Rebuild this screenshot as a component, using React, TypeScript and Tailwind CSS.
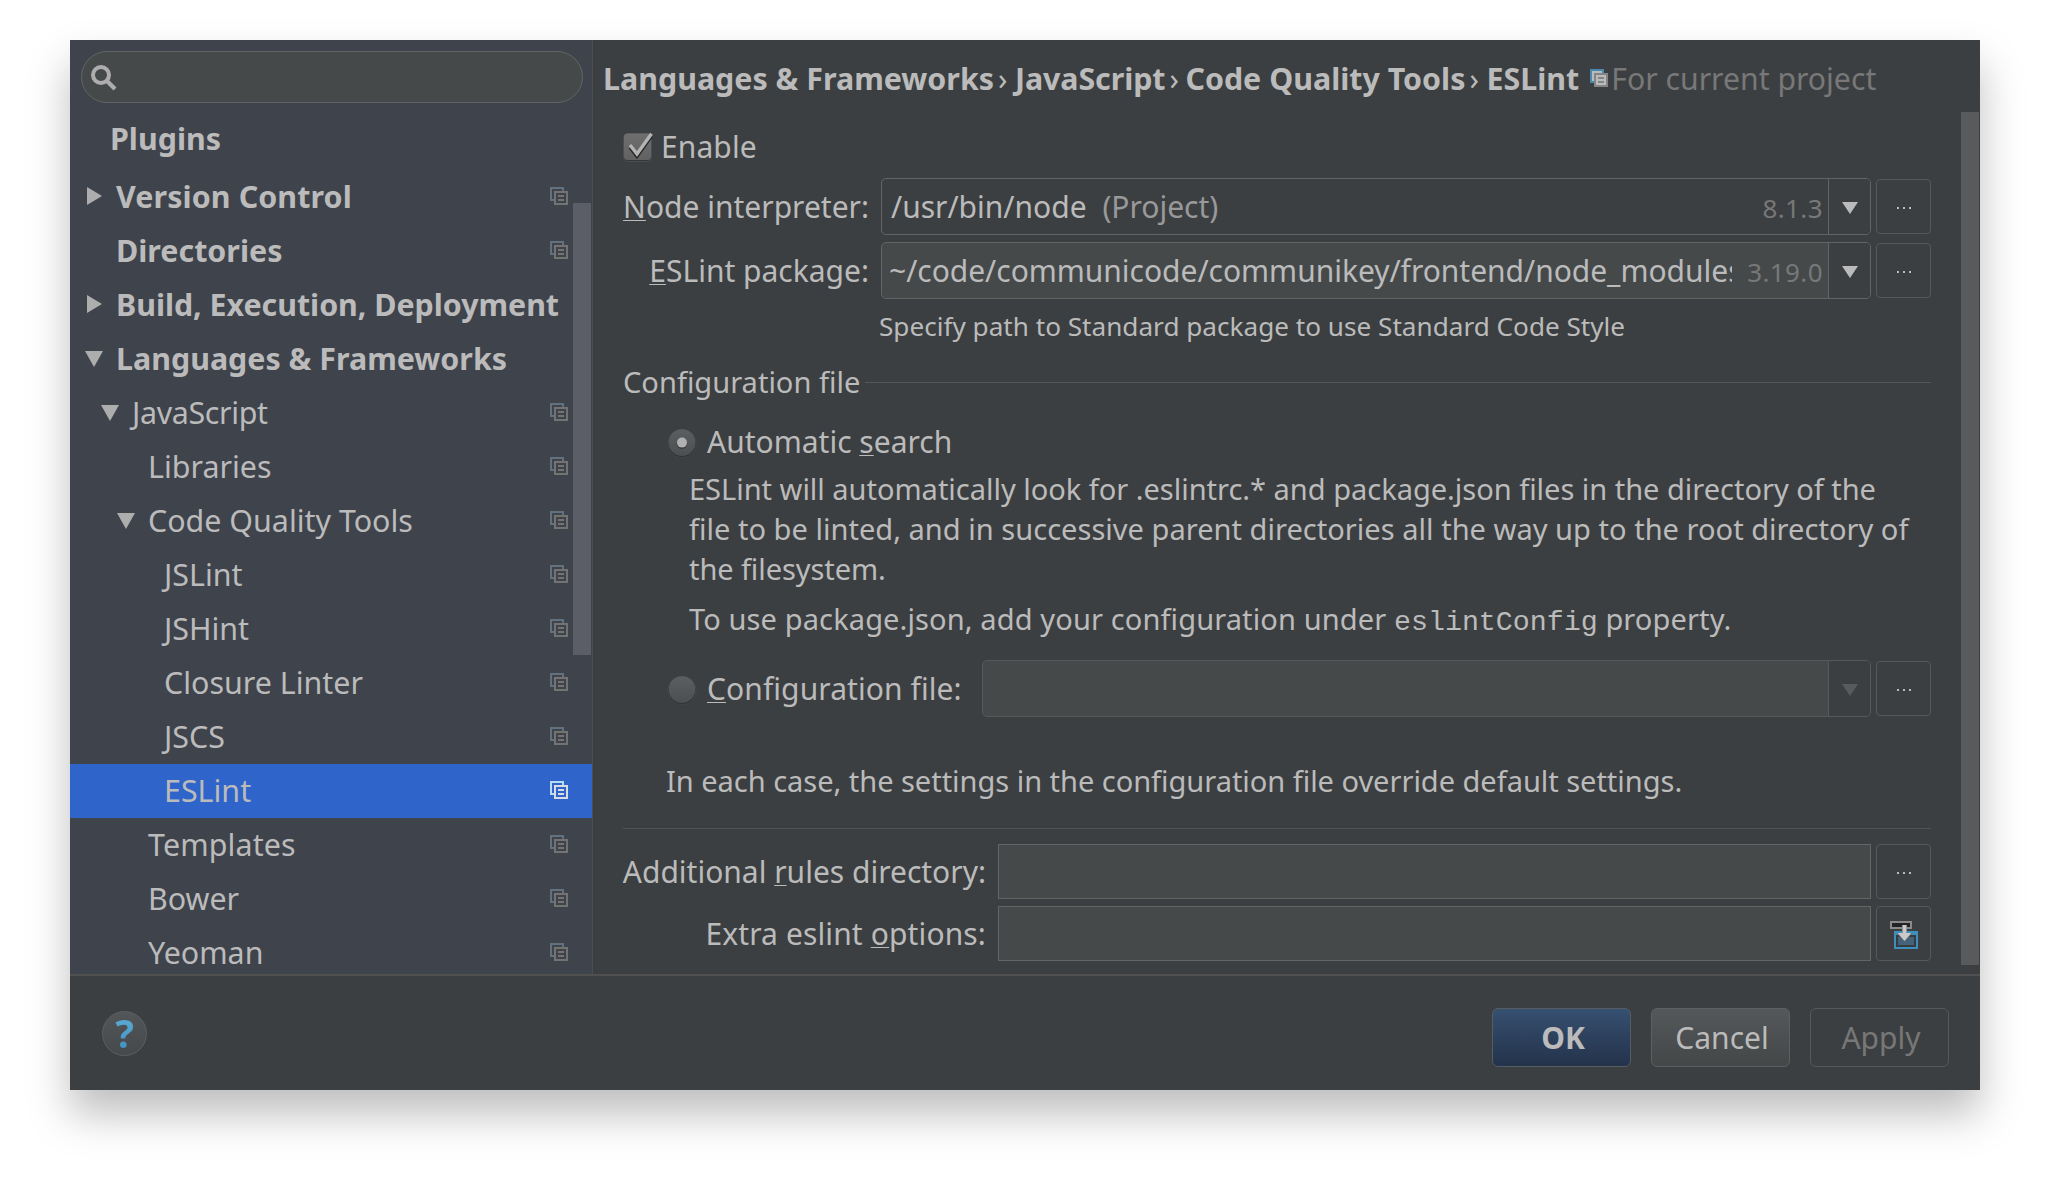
import type { ReactNode } from "react";

type Arrow = "right" | "down" | null;

interface TreeItem {
  label: string;
  indent: string;
  arrow?: Arrow;
  bold?: boolean;
  shared?: boolean;
  selected?: boolean;
  tracking?: string;
}

const L0 = "w-[46px] pr-[13px]";
const L1 = "w-[62px] pr-[13px]";
const L2 = "w-[78px] pr-[13px]";
const L3 = "w-[94px] pr-[13px]";

const tree: TreeItem[] = [
  { label: "Version Control", indent: L0, arrow: "right", bold: true, shared: true, tracking: "tracking-[0.1px]" },
  { label: "Directories", indent: L0, bold: true, shared: true },
  { label: "Build, Execution, Deployment", indent: L0, arrow: "right", bold: true, tracking: "tracking-[-0.04px]" },
  { label: "Languages & Frameworks", indent: L0, arrow: "down", bold: true },
  { label: "JavaScript", indent: L1, arrow: "down", shared: true, tracking: "tracking-[-0.35px]" },
  { label: "Libraries", indent: L2, shared: true },
  { label: "Code Quality Tools", indent: L2, arrow: "down", shared: true },
  { label: "JSLint", indent: L3, shared: true },
  { label: "JSHint", indent: L3, shared: true },
  { label: "Closure Linter", indent: L3, shared: true },
  { label: "JSCS", indent: L3, shared: true },
  { label: "ESLint", indent: L3, shared: true, selected: true },
  { label: "Templates", indent: L2, shared: true, tracking: "tracking-[0.12px]" },
  { label: "Bower", indent: L2, shared: true },
  { label: "Yeoman", indent: L2, shared: true },
];

function CopyIcon({ back, front, fill }: { back: string; front: string; fill?: string }) {
  return (
    <svg width="18" height="18" viewBox="0 0 18 18" shapeRendering="crispEdges" className="shrink-0">
      {fill && <path d="M2 2h10v2H4v8H2z" fill={fill} />}
      <path d="M0 0h14v4h-2V2H2v10h2v2H0z" fill={back} />
      {fill && <path d="M6 6h10v10H6z" fill={fill} />}
      <path d="M4 4h14v14H4zM6 6v10h10V6z" fillRule="evenodd" fill={front} />
      <path d="M8 8h6v2H8zM8 12h6v2H8z" fill={front} />
    </svg>
  );
}

function TreeArrow({ kind }: { kind: Arrow }) {
  if (kind === "right")
    return (
      <svg width="18" height="18" viewBox="0 0 18 18" className="-mt-[2px] shrink-0">
        <path d="M2 0 17 9 2 18z" fill="#adadad" />
      </svg>
    );
  return (
    <svg width="18" height="18" viewBox="0 0 18 18" className="shrink-0">
      <path d="M0 1h18L9 17z" fill="#adadad" />
    </svg>
  );
}

function TreeRow({ item }: { item: TreeItem }) {
  return (
    <div
      className={
        "flex h-[54px] shrink-0 items-center pr-[24px] " + (item.selected ? "bg-[#2f65ca]" : "")
      }
    >
      <div className={"flex shrink-0 justify-end " + item.indent}>
        {item.arrow && <TreeArrow kind={item.arrow} />}
      </div>
      <span
        className={
          "grow whitespace-nowrap text-[30.4px] " +
          (item.bold ? "font-bold " : "") +
          (item.tracking ?? "")
        }
      >
        {item.label}
      </span>
      {item.shared && (
        <div className="-mt-[2px]">
          {item.selected ? (
            <CopyIcon back="#b5dbf5" front="#d8dce2" />
          ) : (
            <CopyIcon back="#63717c" front="#737372" />
          )}
        </div>
      )}
    </div>
  );
}

function U({ children }: { children: ReactNode }) {
  return (
    <span className="underline decoration-1 underline-offset-[2px] [text-decoration-skip-ink:none]">
      {children}
    </span>
  );
}

function DropButton({ disabled }: { disabled?: boolean }) {
  return (
    <div
      className={
        "flex w-[42px] shrink-0 items-center justify-center rounded-r-[4px] border-l bg-[#3c3f41] " +
        (disabled ? "border-[#575858]" : "border-[#646464]")
      }
    >
      <svg width="16" height="12" viewBox="0 0 16 12" className="mt-[3px]">
        <path d="M0 0h16L8 12z" fill={disabled ? "#585a5b" : "#bbbbbb"} />
      </svg>
    </div>
  );
}

function SquareButton({ children }: { children?: ReactNode }) {
  return (
    <button className="ml-[5px] flex h-[55px] w-[55px] shrink-0 items-center justify-center self-center rounded-[4px] border border-[#56585a]">
      {children ?? (
        <svg width="14" height="2" viewBox="0 0 14 2" className="mt-[2px]" shapeRendering="crispEdges">
          <path d="M0 0h2v2H0zM6 0h2v2H6zM12 0h2v2h-2z" fill="#bbbbbb" />
        </svg>
      )}
    </button>
  );
}

function Radio({ on }: { on?: boolean }) {
  return (
    <svg width="30" height="30" viewBox="0 0 30 30" className="mt-[2px] shrink-0">
      <defs>
        <linearGradient id="radioFill" x1="0" y1="0" x2="0" y2="1">
          <stop offset="0" stopColor="#5b5f61" />
          <stop offset="1" stopColor="#4b4f51" />
        </linearGradient>
      </defs>
      <circle cx="15" cy="15.6" r="14" fill="#303234" />
      <circle cx="15" cy="15.4" r="14.3" fill="none" stroke="#4a4d4f" strokeWidth="0.6" />
      <circle cx="15" cy="14.6" r="13.4" fill="url(#radioFill)" />
      {on && (
        <>
          <circle cx="15" cy="15.6" r="5.2" fill="#333537" />
          <circle cx="15" cy="14.6" r="5" fill="#b0b0b0" />
        </>
      )}
    </svg>
  );
}

function CheckBox() {
  return (
    <svg width="30" height="30" viewBox="0 0 30 30" className="shrink-0">
      <defs>
        <linearGradient id="checkFill" x1="0" y1="0" x2="0" y2="1">
          <stop offset="0" stopColor="#6e6e6e" />
          <stop offset="1" stopColor="#626262" />
        </linearGradient>
      </defs>
      <rect x="0.5" y="1.5" width="28" height="28" rx="4" fill="#343638" stroke="#4b4d4f" />
      <rect x="1" y="1.5" width="27" height="26.5" rx="3.5" fill="url(#checkFill)" />
      <path d="M7 15.5 14 24.5 28.5 4" fill="none" stroke="#2a2a2a" strokeWidth="3.4" />
      <path d="M7 13 14 22 28.5 1.8" fill="none" stroke="#b4b4b4" strokeWidth="3.4" />
    </svg>
  );
}

function InsertIcon() {
  return (
    <svg width="28" height="28" viewBox="0 0 28 28" className="mt-[3px]">
      <g shapeRendering="crispEdges">
        <rect x="0" y="0" width="22" height="8" fill="#8b8b8b" />
        <rect x="2" y="2" width="18" height="4" fill="#232323" />
        <path d="M4 10h24v18H4z" fill="#3f8fbd" />
        <path d="M6 14h20v12H6z" fill="#393c3e" />
        <path d="M8 16h16v8H8z" fill="#42637a" />
      </g>
      <path d="M12 4h5v8h5.5l-8 9.500-8-9.500H12z" fill="#54636c" />
      <path d="M12.500 4h4v8h5L14.500 20 7.500 12h5z" fill="#c9c9c9" />
    </svg>
  );
}

export default function App() {
  return (
    <div className="h-[1190px] w-[2050px] overflow-hidden bg-white pl-[70px] pt-[40px] font-['Noto_Sans',sans-serif] text-[30px] leading-none text-[#bbbbbb]">
      <div className="flex h-[1050px] w-[1910px] flex-col bg-[#3c3f41] shadow-[0_24px_40px_rgba(0,0,0,0.26)]">
        <div className="flex h-[934px] shrink-0">
          <aside className="relative flex w-[523px] shrink-0 flex-col overflow-hidden border-r border-[#4c4e50] bg-[#3f434c]">
            <div className="ml-[11px] mt-[11px] flex h-[52px] w-[502px] shrink-0 items-center rounded-full border border-[#646464] bg-[#45494a] pl-[9px] pt-px">
              <svg width="26" height="26" viewBox="0 0 26 26">
                <circle cx="10" cy="10" r="8" fill="none" stroke="#adadad" strokeWidth="4" />
                <path d="M15.500 15.500 24 24" stroke="#adadad" strokeWidth="4.200" />
              </svg>
            </div>
            <div className="flex h-[67px] shrink-0 items-center pl-[40px] pt-[5px] text-[30.4px] font-bold">
              Plugins
            </div>
            {tree.map((item) => (
              <TreeRow key={item.label} item={item} />
            ))}
            <div className="absolute right-px top-[163px] h-[452px] w-[18px] bg-[#5b5e66]" />
          </aside>

          <main className="flex grow flex-col">
            <header className="flex h-[72px] shrink-0 items-center whitespace-nowrap pl-[10px] pt-[7px] text-[30.4px] font-bold">
              <span>Languages &amp; Frameworks</span>
              <span className="w-[21px] pl-[4px] font-normal">›</span>
              <span className="tracking-[-0.1px]">JavaScript</span>
              <span className="w-[20px] pl-[4px] font-normal">›</span>
              <span>Code Quality Tools</span>
              <span className="w-[21px] pl-[4px] font-normal">›</span>
              <span>ESLint</span>
              <span className="-mt-[4px] ml-[11px] mr-[3px]">
                <CopyIcon back="#4a88ad" front="#858585" fill="#b9bcbd" />
              </span>
              <span className="text-[30.2px] font-normal text-[#787878]">For current project</span>
            </header>

            <div className="flex grow">
              <section className="flex grow flex-col px-[30px]">
                <div className="flex h-[65px] items-center pt-1">
                  <CheckBox />
                  <span className="pl-[8px] tracking-[0.1px]">Enable</span>
                </div>

                <div className="mt-px flex h-[57px]">
                  <label className="flex w-[258px] shrink-0 items-center justify-end whitespace-pre pr-[12px]">
                    <U>N</U>ode interpreter:
                  </label>
                  <div className="flex grow rounded-[5px] border border-[#646464]">
                    <div className="flex grow items-center justify-between whitespace-pre pl-[9px] pr-[5px]">
                      <span>
                        /usr/bin/node <span className="pl-[8px] text-[#999999]">(Project)</span>
                      </span>
                      <span className="pt-[2px] text-[26px] tracking-[0.4px] text-[#787878]">8.1.3</span>
                    </div>
                    <DropButton />
                  </div>
                  <SquareButton />
                </div>

                <div className="mt-[7px] flex h-[57px]">
                  <label className="flex w-[258px] shrink-0 items-center justify-end whitespace-pre pr-[12px]">
                    <U>E</U>SLint package:
                  </label>
                  <div className="flex grow rounded-[5px] border border-[#646464] bg-[#45494a]">
                    <div className="flex grow items-center justify-between pl-[7px] pr-[5px]">
                      <span className="h-[44px] w-[843px] overflow-hidden whitespace-nowrap leading-[44px] tracking-[-0.02px]">
                        ~/code/communicode/communikey/frontend/node_modules
                      </span>
                      <span className="pt-[2px] text-[26px] tracking-[0.4px] text-[#787878]">3.19.0</span>
                    </div>
                    <DropButton />
                  </div>
                  <SquareButton />
                </div>

                <p className="flex h-[54px] items-center pl-[256px] text-[26.150px]">
                  Specify path to Standard package to use Standard Code Style
                </p>

                <div className="flex h-[58px] items-center text-[29.050px]">
                  <span className="pt-[2px]">Configuration file</span>
                  <span className="ml-[5px] h-px grow bg-[#55585a]" />
                </div>

                <div className="flex h-[57px] items-center pl-[44px] pt-1">
                  <Radio on />
                  <span className="whitespace-pre pl-[10px]">
                    Automatic <U>s</U>earch
                  </span>
                </div>

                <div className="mt-px pl-[66px] text-[29.050px] leading-[40px]">
                  <p className="whitespace-nowrap">
                    <span className="tracking-[-0.03px]">
                      ESLint will automatically look for .eslintrc.* and package.json files in the directory of the
                    </span>
                    <br />
                    <span className="tracking-[0.012px]">
                      file to be linted, and in successive parent directories all the way up to the root directory of
                    </span>
                    <br />
                    <span className="tracking-[-0.1px]">the filesystem.</span>
                  </p>
                  <p className="mt-[10px] h-[40px] whitespace-nowrap tracking-[0.1px]">
                    To use package.json, add your configuration under{" "}
                    <code className="font-['Liberation_Mono',monospace] text-[28.300px] leading-none tracking-normal">
                      eslintConfig
                    </code>{" "}
                    property.
                  </p>
                </div>

                <div className="mt-[21px] flex h-[57px]">
                  <div className="flex w-[359px] shrink-0 items-center pl-[44px]">
                    <Radio />
                    <span className="whitespace-pre pl-[10px] tracking-[0.08px]">
                      <U>C</U>onfiguration file:
                    </span>
                  </div>
                  <div className="flex grow rounded-[5px] border border-[#575858] bg-[#45494a]">
                    <div className="grow" />
                    <DropButton disabled />
                  </div>
                  <SquareButton />
                </div>

                <p className="flex h-[111px] items-center whitespace-nowrap pl-[43px] pt-[19px] text-[29.050px] tracking-[-0.04px]">
                  In each case, the settings in the configuration file override default settings.
                </p>
                <div className="h-px bg-[#515253]" />

                <div className="mt-[15px] flex h-[55px]">
                  <label className="flex w-[375px] shrink-0 items-center justify-end whitespace-pre pr-[12px]">
                    Additional <U>r</U>ules directory:
                  </label>
                  <div className="grow border border-[#646464] bg-[#45494a]" />
                  <SquareButton />
                </div>
                <div className="mt-[7px] flex h-[55px]">
                  <label className="flex w-[375px] shrink-0 items-center justify-end whitespace-pre pr-[12px] tracking-[0.12px]">
                    Extra eslint <U>o</U>ptions:
                  </label>
                  <div className="grow border border-[#646464] bg-[#45494a]" />
                  <SquareButton>
                    <InsertIcon />
                  </SquareButton>
                </div>
              </section>
              <div className="mr-px h-[853px] w-[18px] shrink-0 bg-[#595a5c]" />
            </div>
          </main>
        </div>

        <footer className="flex grow items-center border-t-2 border-[#505051] pl-[32px] pr-[31px]">
          <button className="flex h-[45px] w-[45px] items-center justify-center rounded-full border border-[#5c5e5f] bg-linear-to-b from-[#525658] to-[#45494b]">
            <span className="bg-linear-to-b from-[#5fb0d8] to-[#3f8cc0] bg-clip-text text-[39px] font-bold leading-[44px] text-transparent">
              ?
            </span>
          </button>
          <div className="ml-auto mt-[9px] flex gap-[20px]">
            <button className="h-[59px] w-[139px] rounded-[6px] border border-[#555c63] bg-linear-to-b from-[#365070] to-[#24334b] pl-[3px] font-bold">
              OK
            </button>
            <button className="h-[59px] w-[139px] rounded-[6px] border border-[#5d6061] bg-linear-to-b from-[#54585a] to-[#434748] pl-[3px]">
              Cancel
            </button>
            <button className="h-[59px] w-[139px] rounded-[6px] border border-[#56585a] pl-[3px] text-[#777777]">
              Apply
            </button>
          </div>
        </footer>
      </div>
    </div>
  );
}
